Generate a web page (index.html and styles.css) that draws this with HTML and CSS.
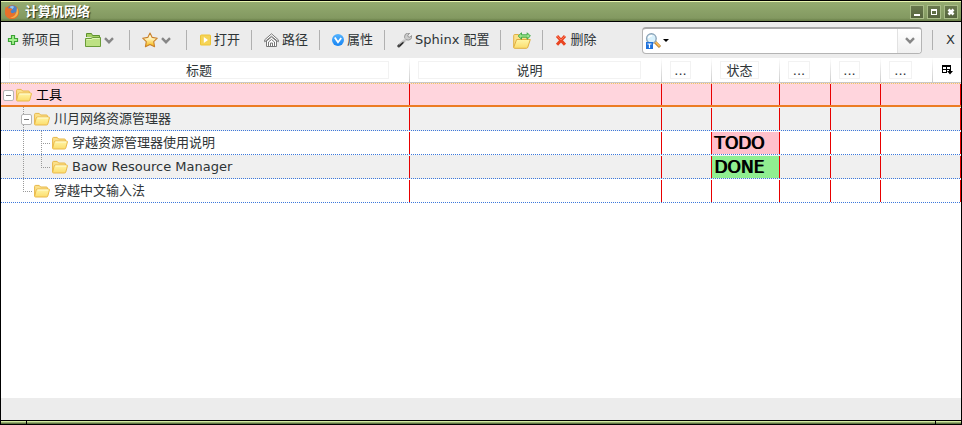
FILE: index.html
```html
<!DOCTYPE html>
<html lang="zh-CN">
<head>
<meta charset="utf-8">
<title>计算机网络</title>
<link rel="stylesheet" href="styles.css">
</head>
<body>
<svg class="defs" aria-hidden="true">
  <defs>
    <linearGradient id="yellow" x1="0" y1="0" x2="0" y2="1"><stop offset="0" stop-color="#fff6a8"/><stop offset="1" stop-color="#fbdc6c"/></linearGradient>
    <linearGradient id="gold" x1="0" y1="0" x2="0" y2="1"><stop offset="0" stop-color="#fffdf0"/><stop offset=".45" stop-color="#fff0b0"/><stop offset="1" stop-color="#f6b400"/></linearGradient>
    <linearGradient id="blue" x1="0" y1="0" x2="0" y2="1"><stop offset="0" stop-color="#55b4ff"/><stop offset="1" stop-color="#1583f2"/></linearGradient>
    <linearGradient id="steel" x1="1" y1="0" x2="0" y2="1"><stop offset="0" stop-color="#ddd"/><stop offset=".5" stop-color="#999"/><stop offset="1" stop-color="#444"/></linearGradient>
  </defs>
  <symbol id="folder" viewBox="0 0 16 14">
    <path d="M.6 12V2.4Q.6 1.4 1.6 1.4H5.2L6.6 3H12.4Q13.4 3 13.4 4V6" fill="#fbe08a" stroke="#e8b848"/>
    <path d="M3.3 5H14.6Q15.6 5 15.4 6L13.8 12Q13.5 13 12.5 13H1.5Q.4 13 .7 12L2.2 6Q2.4 5 3.3 5Z" fill="url(#yellow)" stroke="#eab94a"/>
    <path d="M3.6 6H14.2" stroke="#fffbd6"/>
  </symbol>
  <symbol id="chevron" viewBox="0 0 10 7"><path d="M1 1.2 5 5.2 9 1.2" fill="none" stroke="#868686" stroke-width="2.4"/></symbol>
</svg>
<div class="window">
  <header class="titlebar">
    <svg class="logo" viewBox="0 0 16 16" aria-hidden="true">
      <circle cx="8" cy="8" r="7" fill="#e6711c"/>
      <circle cx="8.4" cy="6.4" r="5.2" fill="#4c82c8"/>
      <path d="M6 2.5Q9 1.5 10 3L8.5 5 6.5 4Z" fill="#9cc8ef"/>
      <path d="M1.6 2.6Q2.6 4 4 4.2L7.5 4.4 8.4 5.6 6.5 7Q6.6 9.2 8.8 9.2 11 9 11.4 7.6 12.4 10.6 9 12 13.6 11.4 13 6 15 9.5 12.6 13 9 16.2 4 14 .4 11.4 1 6.6Z" fill="#e9702a"/>
      <path d="M13 3.5Q15.6 8 13 11.8 10 15 6 13.6 12.6 13.3 13 3.5Z" fill="#f6b24a"/>
    </svg>
    <h1>计算机网络</h1>
    <div class="controls">
      <button type="button" aria-label="最小化"><svg viewBox="0 0 12 12"><path d="M3 8H9V10H3Z" fill="#fff"/></svg></button>
      <button type="button" aria-label="最大化"><svg viewBox="0 0 12 12"><path fill-rule="evenodd" d="M3 3H9V9H3ZM4 5V8H8V5Z" fill="#fff"/></svg></button>
      <button type="button" aria-label="关闭"><svg viewBox="0 0 12 12"><path d="M3.5 3.5 8.5 8.5M8.5 3.5 3.5 8.5" stroke="#fff" stroke-width="2.6"/></svg></button>
    </div>
  </header>

  <nav class="toolbar">
    <button type="button" class="tool first">
      <svg class="small" viewBox="0 0 12 12"><path d="M4.5 1.5H7.5V4.5H10.5V7.5H7.5V10.5H4.5V7.5H1.5V4.5H4.5Z" fill="#a5f08e" stroke="#3aa335" stroke-width="1.2"/></svg>新项目</button>
    <button type="button" class="tool" aria-label="文件夹">
      <svg class="icon" viewBox="0 0 16 16"><path d="M1.5 5V1.5H6.5L7.5 3.5H14.5V6" fill="#a3cf62" stroke="#5f9130"/><path d="M.5 6.5H6L7.5 5.5H15.5V14.5H.5Z" fill="#bde183" stroke="#6a9c38"/><path d="M1.5 7.5H6.5L8 6.5H14.5" stroke="#e0f6b6" fill="none"/></svg>
      <svg class="arrow"><use href="#chevron"/></svg></button>
    <button type="button" class="tool" aria-label="收藏">
      <svg class="icon" viewBox="0 0 16 16"><path d="M8 1 10.2 5.4 15.3 6.2 11.7 9.7 12.6 14.8 8 12.6 3.4 14.8 4.3 9.7.7 6.2 5.8 5.4Z" fill="url(#gold)" stroke="#c9812c" stroke-width="1.1" stroke-linejoin="round"/></svg>
      <svg class="arrow"><use href="#chevron"/></svg></button>
    <button type="button" class="tool">
      <svg class="small" viewBox="0 0 12 12"><rect x="1" y=".5" width="11" height="11" rx="1.5" fill="#efc534"/><rect x="2" y="1.5" width="9" height="9" fill="#f5d457"/><path d="M4.8 3 9 6 4.8 9Z" fill="#fff"/></svg>打开</button>
    <button type="button" class="tool">
      <svg class="mid" viewBox="0 0 15 15"><g fill="#fff" stroke="#777"><path d="M2.5 8V13.5H12.5V8L7.5 4Z"/><path d="M7.5.8 14.3 6.8V8.8L7.5 3.2.7 8.8V6.8Z"/><path d="M4.5 13V9L7.5 6.5 10.5 9V13M6.5 13V10H8.5V13" fill="none"/></g></svg>路径</button>
    <button type="button" class="tool">
      <svg class="small" viewBox="0 0 12 12"><circle cx="6" cy="6" r="6" fill="url(#blue)"/><path d="M2.8 3.4 6 8.2 9.2 4" fill="none" stroke="#fff" stroke-width="1.8"/></svg>属性</button>
    <button type="button" class="tool">
      <svg class="mid" viewBox="0 0 15 15"><path d="M1.8 13 9 6" stroke="url(#steel)" stroke-width="3" stroke-linecap="round"/><path d="M8.4 1.2Q10.4-.4 12.6.4L10.8 2.2 11.2 3.8 12.8 4.2 14.6 2.6Q15.2 5 13.4 6.4 11.4 7.6 9.4 6.8L7.8 5.2Q7.2 3 8.4 1.2Z" fill="#ccc" stroke="#777" stroke-width=".7"/><path d="M2.8 12.8 6.4 9.4" stroke="#222" stroke-width="1.3"/><path d="M2.2 11.2 8.6 5" stroke="#e4e4e4" stroke-width=".9"/></svg>Sphinx 配置</button>
    <button type="button" class="tool" aria-label="同步文件夹">
      <svg class="wide" viewBox="0 0 18 17"><path d="M.7 15V3.5Q.7 2.5 1.7 2.5H5.5L7 4.5H14V8" fill="#fbe08a" stroke="#dfb045"/><path d="M3.6 7.5H17.3L14.8 15.2Q14.5 16.3 13.4 16.3H1.5Q.4 16.3.8 15Z" fill="url(#yellow)" stroke="#e0ae40"/><path d="M5.2 4 8.5.8V2.8H14.2V.8L17.4 4 14.2 7.2V5.2H8.5V7.2Z" fill="#9ae58d" stroke="#36a13d" stroke-width=".9"/></svg></button>
    <button type="button" class="tool last">
      <svg class="small" viewBox="0 0 12 12"><path d="M2 2 10 10.8M10 2 2 10.8" stroke="#e94420" stroke-width="3"/><path d="M2 2 6 6 10 2" fill="none" stroke="#fb7358"/></svg>删除</button>
    <div class="search">
      <button type="button" class="scope" aria-label="搜索范围"><svg viewBox="0 0 26 18">
        <path d="M9 8 15 14" stroke="#b07b32" stroke-width="3"/><path d="M9.5 8 14.6 13.4" stroke="#ffbd56" stroke-width="1.6"/>
        <circle cx="6.4" cy="5.6" r="4.8" fill="#d8f1fc" stroke="#8ca4b8" stroke-width="1.4"/><path d="M3.4 5Q4.4 2.4 7.2 2.8" stroke="#fff" stroke-width="1.6" fill="none"/>
        <path d="M1 9H8V16H1Z" fill="#1f72dc"/><path d="M2.5 11H6.5M4.5 11V15" stroke="#fff" stroke-width="1.2"/>
        <path d="M18 6H24L21 9Z" fill="#000"/></svg></button>
      <input type="text" aria-label="搜索">
      <button type="button" class="drop" aria-label="搜索历史"><svg><use href="#chevron"/></svg></button>
    </div>
    <button type="button" class="close">X</button>
  </nav>

  <main class="content">
    <table>
      <colgroup><col><col class="c2"><col class="c3"><col class="c4"><col class="c5"><col class="c6"><col class="c7"><col class="c8"></colgroup>
      <thead><tr>
        <th><div>标题</div></th><th><div>说明</div></th><th><div>...</div></th><th><div>状态</div></th><th><div>...</div></th><th><div>...</div></th><th><div>...</div></th>
        <th class="picker"><button type="button" aria-label="选择列"><svg viewBox="0 0 11 10"><path d="M0 0H9V5H8V2H5V4H8V5H5V8H0ZM1 2V4H4V2ZM1 5V7H4V5Z" fill-rule="evenodd"/><path d="M7 4H9V6H11L8 9.5 5 6H7Z"/></svg></button></th>
      </tr></thead>
      <tbody>
        <tr class="selected"><td><div class="cell"><i class="slot root"><b class="toggle"></b></i><svg class="folder"><use href="#folder"/></svg><span>工具</span></div></td>
          <td><div class="cell"></div></td><td><div class="cell"></div></td><td><div class="cell"></div></td><td><div class="cell"></div></td><td><div class="cell"></div></td><td colspan="2"><div class="cell"></div></td></tr>
        <tr class="odd"><td><div class="cell"><i class="slot root"></i><i class="slot line"><b class="toggle"></b></i><svg class="folder"><use href="#folder"/></svg><span>川月网络资源管理器</span></div></td>
          <td><div class="cell"></div></td><td><div class="cell"></div></td><td><div class="cell"></div></td><td><div class="cell"></div></td><td><div class="cell"></div></td><td colspan="2"><div class="cell"></div></td></tr>
        <tr><td><div class="cell"><i class="slot root"></i><i class="slot line"></i><i class="slot line tee"></i><svg class="folder"><use href="#folder"/></svg><span>穿越资源管理器使用说明</span></div></td>
          <td><div class="cell"></div></td><td><div class="cell"></div></td><td><div class="cell"><strong class="status todo">TODO</strong></div></td><td><div class="cell"></div></td><td><div class="cell"></div></td><td colspan="2"><div class="cell"></div></td></tr>
        <tr class="odd"><td><div class="cell"><i class="slot root"></i><i class="slot line"></i><i class="slot elbow"></i><svg class="folder"><use href="#folder"/></svg><span>Baow Resource Manager</span></div></td>
          <td><div class="cell"></div></td><td><div class="cell"></div></td><td><div class="cell"><strong class="status done">DONE</strong></div></td><td><div class="cell"></div></td><td><div class="cell"></div></td><td colspan="2"><div class="cell"></div></td></tr>
        <tr><td><div class="cell"><i class="slot root"></i><i class="slot elbow"></i><svg class="folder"><use href="#folder"/></svg><span>穿越中文输入法</span></div></td>
          <td><div class="cell"></div></td><td><div class="cell"></div></td><td><div class="cell"></div></td><td><div class="cell"></div></td><td><div class="cell"></div></td><td colspan="2"><div class="cell"></div></td></tr>
      </tbody>
    </table>
  </main>
  <div class="statusbar"></div>
  <footer class="resize"><i class="corner"></i><i class="edge"></i><i class="corner"></i></footer>
</div>
</body>
</html>
```
FILE: styles.css
```css
* { box-sizing: border-box; }
body {
  margin: 0;
  font: 13px/18px "DejaVu Sans", "Noto Sans CJK SC", sans-serif;
  color: #2e3436;
}
button { margin: 0; padding: 0; border: 0; background: none; font: inherit; color: inherit; }
svg { display: block; flex: none; }
.defs { position: absolute; width: 0; height: 0; }

.window {
  display: flex;
  flex-direction: column;
  min-height: 100vh;
  border: solid #000;
  border-width: 1px 1px 0;
  background: #fff;
}

.titlebar {
  display: flex;
  align-items: center;
  height: 21px;
  padding: 0 3px;
  border-top: 1px solid #e9f5b0;
  border-bottom: 1px solid #000;
  background: linear-gradient(#94ab70, #839961 85%, #667b46);
}
.logo { width: 16px; height: 16px; }
.titlebar h1 {
  flex: 1;
  margin: 0 0 0 5px;
  font-size: 13px;
  font-weight: bold;
  line-height: 18px;
  color: #fff;
  text-shadow: 1px 1px 1px #27331a;
}
.controls { display: flex; gap: 3px; }
.controls button {
  width: 14px;
  height: 14px;
  border: 1px solid #a9bd87;
  background: linear-gradient(#69794d, #56643e);
}
.controls svg { width: 12px; height: 12px; }

.toolbar {
  display: flex;
  align-items: center;
  height: 36px;
  background: #ececec;
}
.tool {
  display: flex;
  align-items: center;
  gap: 3px;
  height: 20px;
  padding: 0 11px 0 12px;
  border-right: 1px solid #b0b0b0;
  line-height: 20px;
  white-space: nowrap;
}
.tool.first { padding-left: 6px; }
.tool.last { border-right: 0; }
.small { width: 12px; height: 12px; }
.mid { width: 15px; height: 15px; }
.icon { width: 16px; height: 16px; }
.wide { width: 18px; height: 17px; }
.arrow { width: 10px; height: 7px; margin-right: 4px; }

.search {
  display: flex;
  flex: 1;
  height: 27px;
  margin: 0 10px 0 34px;
  border: 1px solid #b4b4b4;
  border-top: 2px solid #a9a9a9;
  border-radius: 4px;
  background: #fff;
  overflow: hidden;
}
.scope { padding: 2px 0 0 2px; }
.scope svg { width: 26px; height: 18px; }
.search input {
  flex: 1;
  min-width: 0;
  padding: 0 4px;
  border: 0;
  outline: 0;
  background: none;
  font: inherit;
}
.drop {
  display: grid;
  place-items: center;
  width: 24px;
  border-left: 1px solid #e2e2e2;
  background: linear-gradient(#fff, #f0f0f0);
}
.drop svg { width: 10px; height: 7px; }
.close { height: 20px; padding: 0 6px 0 13px; border-left: 1px solid #b0b0b0; line-height: 20px; }

.content { flex: 1; }
table { width: 100%; border-spacing: 0; table-layout: fixed; }
.c2 { width: 252px; }
.c3, .c6 { width: 50px; }
.c4 { width: 68px; }
.c5 { width: 51px; }
.c7 { width: 52px; }
.c8 { width: 28px; }
th, td { padding: 0; }
th {
  height: 25px;
  border-bottom: 1px solid #c8c8c8;
  font-weight: normal;
  background: linear-gradient(#fff, #ccc) right / 1px 100% no-repeat;
}
th div {
  height: 18px;
  margin: 0 21px 0 8px;
  border: 1px solid #f2f2f2;
  line-height: 18px;
}
th.picker { background: none; }
.picker button { display: block; margin: 0 auto; }
.picker svg { width: 11px; height: 10px; }

tbody tr { background: repeating-linear-gradient(90deg, #3c78dc 0 1px, transparent 1px 2px) bottom / 100% 1px no-repeat; }
tbody tr.odd { background-color: #f0f0f0; }
tbody tr.selected {
  background:
    linear-gradient(#ec7c24, #ec7c24) bottom / 100% 2px no-repeat,
    repeating-linear-gradient(90deg, #f0c860 0 1px, transparent 1px 2px) top / 100% 1px no-repeat,
    #ffd5dd;
  color: #000;
}
.cell {
  display: flex;
  align-items: center;
  height: 24px;
  background: linear-gradient(#e80000, #e80000) right 1px / 1px 22px no-repeat;
}
.selected .cell { background-size: 1px 21px; }
.folder { width: 16px; height: 14px; margin-right: 4px; }
.slot {
  display: flex;
  flex: none;
  align-items: center;
  width: 18px;
  height: 24px;
  padding-left: 5px;
  background-repeat: no-repeat;
}
.slot.root { width: 15px; padding-left: 2px; }
.line, .elbow {
  background-image:
    repeating-linear-gradient(#999 0 1px, transparent 1px 2px),
    repeating-linear-gradient(90deg, #999 0 1px, transparent 1px 2px);
  background-position: 7px 0, 7px 12px;
  background-size: 1px 24px, 0 0;
}
.tee { background-size: 1px 24px, 9px 1px; }
.elbow { background-size: 1px 12px, 9px 1px; }
.toggle {
  width: 11px;
  height: 11px;
  border: 1px solid #b4b4b4;
  border-radius: 2px;
  background: linear-gradient(#777, #777) center / 5px 1px no-repeat #fff;
}
.status {
  flex: 1;
  height: 22px;
  margin-right: 1px;
  padding-left: 2px;
  font-size: 17px;
  font-weight: normal;
  line-height: 22px;
  color: #000;
  text-shadow: 1px 0 0 #000;
}
.todo { background: #ffc0cb; }
.done { background: #90ee90; }

.statusbar { height: 22px; background: #ececec; }
.resize {
  display: flex;
  gap: 1px;
  height: 5px;
  border: solid #000;
  border-width: 1px 0;
  background: #000;
}
.resize i { background: linear-gradient(#d4eba0 0 1px, #94ab70 1px 2px, #5f7541 2px); }
.corner { width: 25px; }
.edge { flex: 1; }
```
